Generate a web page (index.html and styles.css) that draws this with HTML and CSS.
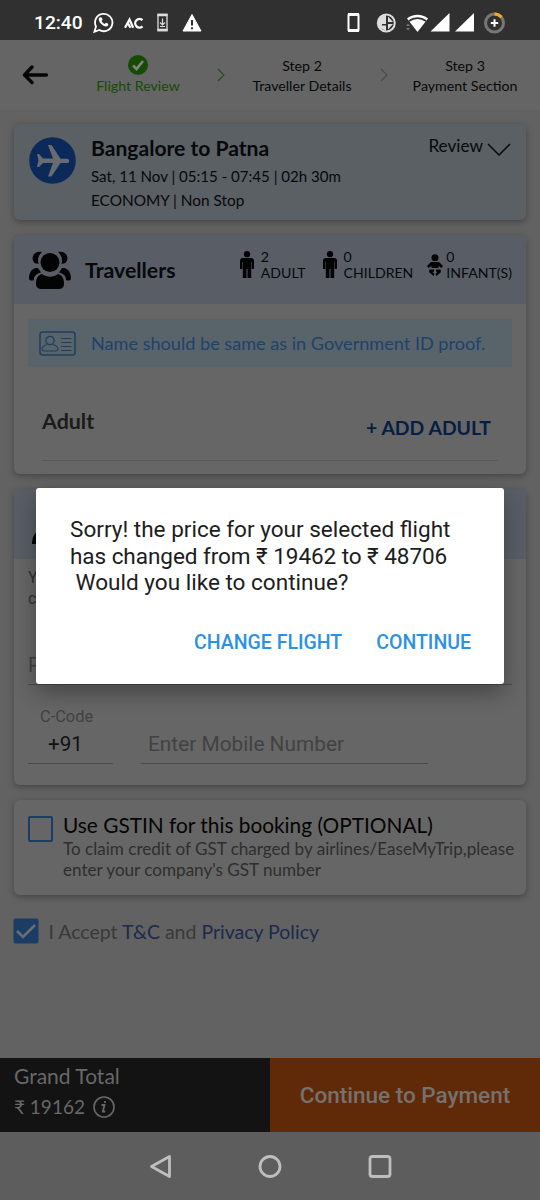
FILE: index.html
```html
<!DOCTYPE html>
<html lang="en">
<head>
<meta charset="utf-8">
<title>Traveller Details</title>
<link rel="stylesheet" href="styles.css">
</head>
<body>
<div class="screen">
  <div class="status">
    <span class="clock">12:40</span>
    <svg class="status-left" width="112" height="24" viewBox="0 0 112 24">
      <path d="M1.4 20.8 3 15.5A8.7 8.7 0 1 1 6.3 19z" fill="none" stroke="#fff" stroke-width="1.8"/>
      <path d="M7 6.3c-2 1-1.4 4 1 6.5s5.500 3.600 7 1.700c.5-.7.400-1.500-.3-1.900l-1.700-.8-1.300 1.200c-1.500-.6-2.500-1.600-3.100-3l1-1.200-.8-2c-.3-.6-1.100-.8-1.800-.5z" fill="#fff"/>
      <path d="M32 16.800 36.500 8.500 40.200 16.800M35 12.500l2.500 4.300" fill="none" stroke="#fff" stroke-width="2.200"/>
      <path d="M49.500 9.200A4.300 4.300 0 1 0 49.500 15.400" fill="none" stroke="#fff" stroke-width="2.300"/>
      <path d="M65 3.500h9v16h-9z" fill="none" stroke="#ddd" stroke-width="1.300"/><path d="M64.500 4h10M64.500 19h10" stroke="#ddd" stroke-width="2.500"/>
      <path d="M69.500 7.500v6M67 11.500l2.500 2.500 2.500-2.500M67 15.500h5" fill="none" stroke="#ddd" stroke-width="1.200"/>
      <path d="M99 3.500 108 20H90z" fill="#fff" stroke="#fff" stroke-linejoin="round"/><path d="M99 9v5.500M99 16.200v2" stroke="#303030" stroke-width="2"/>
    </svg>
    <svg class="status-right" width="162" height="24" viewBox="0 0 162 24">
      <rect x="2.500" y="3" width="10" height="17" rx="1" fill="none" stroke="#fff" stroke-width="2"/><path d="M2 3.500h11M2 19.500h11" stroke="#fff" stroke-width="3"/>
      <circle cx="40.300" cy="12" r="8.500" fill="none" stroke="#ddd" stroke-width="2"/><path d="M40 3.500A8.500 8.500 0 0 0 33 16.500L40 20v-5.500h-4V13h4zM42 5.500l5 5.500h-5zM42 13h5l-5 5.500z" fill="#ddd"/>
      <path d="M61 7.500a17 17 0 0 1 21 0L71.500 21z" fill="#fff"/><path d="M63 10a14 14 0 0 1 17 0" fill="none" stroke="#303030" stroke-width="1.700"/>
      <path d="m60 15 2-2.500 2 2.500zm0 2 2 2.500 2-2.500z" fill="#777"/>
      <path d="M103.500 2v18.500H84.500zM128 2v18.500h-19z" fill="#fff"/>
      <circle cx="148.500" cy="12" r="9" fill="none" stroke="#777" stroke-width="3"/><path d="M148.500 3a9 9 0 0 1 7 3.300" fill="none" stroke="#f3a91d" stroke-width="3"/><path d="M148.500 8.300v7.400M144.800 12h7.400" stroke="#fff" stroke-width="2"/>
    </svg>
  </div>

  <header class="steps">
    <svg class="back" width="27" height="20" viewBox="0 0 27 20"><path d="M10 2 2.500 10 10 17.500M3 10h21.500" fill="none" stroke="#050505" stroke-width="3.300" stroke-linecap="round" stroke-linejoin="round"/></svg>
    <div class="step step-done">
      <svg width="20" height="20" viewBox="0 0 20 20"><circle cx="10" cy="10" r="10" fill="#154b03"/><path d="m5 10.500 3.500 3.500 6.500-8" fill="none" stroke="#808080" stroke-width="2.700"/></svg>
      <span>Flight Review</span>
    </div>
    <svg class="sep" width="8" height="14" viewBox="0 0 8 14"><path d="m1 1 6 6-6 6" fill="none" stroke="#244d18" stroke-width="1.100"/></svg>
    <div class="step step-two"><span>Step 2</span><span>Traveller Details</span></div>
    <svg class="sep" width="8" height="14" viewBox="0 0 8 14"><path d="m1 1 6 6-6 6" fill="none" stroke="#4b4b4b" stroke-width="1.200"/></svg>
    <div class="step step-three"><span>Step 3</span><span>Payment Section</span></div>
  </header>

  <main class="content">
    <section class="card trip">
      <svg class="plane" width="47" height="47" viewBox="0 0 47 47"><circle cx="23.500" cy="23.500" r="23.300" fill="#0b2a5a"/><path d="M8 17h2l4 4.500h10L19 8h3.500l9 13.700H38a2.200 2.200 0 0 1 0 4.400h-6.500L22.500 39.500H19l5-13.400H14L10 30H8l1.500-6.500z" fill="#686b6f"/></svg>
      <div class="trip-text">
        <h1>Bangalore to Patna</h1>
        <p class="when">Sat, 11 Nov | 05:15 - 07:45 | 02h 30m</p>
        <p class="cabin">ECONOMY | Non Stop</p>
      </div>
      <div class="review"><span>Review</span><svg width="24" height="14" viewBox="0 0 24 14"><path d="m1 1 11 11L23 1" fill="none" stroke="#080a0c" stroke-width="1.500"/></svg></div>
    </section>

    <section class="card travellers">
      <div class="card-head">
        <svg class="group" width="42" height="38" viewBox="0 0 42 38" fill="#020304">
          <circle cx="21" cy="11.500" r="9.500"/>
          <path d="M13 1C5-1 1 7 5.500 12l4 1C8.500 8 9 5 13 1zM29 1c8-2 12 6 7.500 11l-4 1c1-5 .5-8-3.500-12zM9 17c-6-1-9 5-9 10 0 3 3 3 5 2 0-4 2-6 7-7.500zM33 17c6-1 9 5 9 10 0 3-3 3-5 2 0-4-2-6-7-7.500z"/>
          <path d="M13 23c5 3.500 11 3.500 16 0 4 1 6 4 6 10 0 4-3 5-6 5H13c-3 0-6-1-6-5 0-6 2-9 6-10z"/>
        </svg>
        <h2>Travellers</h2>
        <svg class="person person-a" width="14" height="28" viewBox="0 0 14 28"><use href="#person"/></svg>
        <div class="count count-a"><span>2</span><span>ADULT</span></div>
        <svg class="person" width="14" height="28" viewBox="0 0 14 28"><g id="person" fill="#020304"><circle cx="7" cy="3.200" r="3.100"/><path d="M3 7h8q3 0 3 3v8h-2.300v-7h-.5v16H7.500v-9h-1v9H2.800V11h-.5v7H0v-8q0-3 3-3z"/></g></svg>
        <div class="count count-c"><span>0</span><span>CHILDREN</span></div>
        <svg class="baby" width="16" height="23" viewBox="0 0 16 23" fill="#020304"><circle cx="8" cy="3.700" r="3.500"/><path d="M4 8h8l4 4-1.500 2-3-2v2h-7v-2l-3 2L0 12zM2.500 15.500l4.500 0 0 2-1.500.5 2 2-1 2-4.500-4zM13.500 15.500l-4.500 0 0 2 1.500.5-2 2 1 2 4.500-4z"/></svg>
        <div class="count"><span>0</span><span>INFANT(S)</span></div>
      </div>
      <div class="notice">
        <svg width="37" height="25" viewBox="0 0 37 25" fill="none" stroke="#1d3e60" stroke-width="1.200"><rect x="1" y="1" width="35" height="23" rx="2.500" stroke-width="1.500"/><circle cx="11" cy="9.500" r="4.200"/><path d="M8 13.500c-3 1-5 2-5 5 0 1 .5 1.500 2 1.500h12c1.500 0 2-.5 2-1.500 0-3-2-4-5-5M22 7.500h10.500M22 11.500h10.500M22 15.500h10.500M22 19.500h10.500"/></svg>
        <span>Name should be same as in Government ID proof.</span>
      </div>
      <div class="adult-row"><h3>Adult</h3><span class="add">+ ADD ADULT</span></div>
    </section>

    <section class="card contact">
      <div class="card-head contact-head"><svg width="34" height="34" viewBox="0 0 34 34" fill="#020304"><circle cx="17" cy="9" r="8"/><path d="M1 33c0-9 5-16 16-16s14 7 14 16z"/></svg></div>
      <p class="hint">Y<br>c</p>
      <div class="email">P</div>
      <div class="phone">
        <div class="code"><small>C-Code</small><span>+91</span></div>
        <div class="mobile">Enter Mobile Number</div>
      </div>
    </section>

    <section class="card gst">
      <span class="box"></span>
      <div><h4>Use GSTIN for this booking (OPTIONAL)</h4><p>To claim credit of GST charged by airlines/EaseMyTrip,please</p><p>enter your company's GST number</p></div>
    </section>

    <div class="accept">
      <svg width="26" height="26" viewBox="0 0 26 26"><rect x=".5" y=".5" width="25" height="25" rx="2" fill="#1b3c65"/><path d="m4 13 6 6L22 7" fill="none" stroke="#6b6d70" stroke-width="2.600"/></svg>
      <span>I Accept <a>T&amp;C</a> and <a>Privacy Policy</a></span>
    </div>
  </main>

  <footer class="pay">
    <div class="total">
      <span class="total-label">Grand Total</span>
      <span class="total-value">₹ 19162 <svg width="22" height="22" viewBox="0 0 22 22" fill="none" stroke="#686868"><circle cx="11" cy="11" r="10" stroke-width="1.600"/><path d="M8.500 9h3l-1.700 6.500h2.500M12 5v2" stroke-width="1.800"/></svg></span>
    </div>
    <div class="continue">Continue to Payment</div>
  </footer>

  <nav class="nav">
    <svg width="540" height="68" viewBox="0 0 540 68" fill="none" stroke="#bebebe" stroke-width="2.800" stroke-linejoin="round"><path d="M151.500 34.500 169.500 24.500v20z"/><circle cx="270" cy="34.500" r="10"/><rect x="370" y="24.500" width="20" height="20" rx="2.500"/></svg>
  </nav>

  <div class="dialog" role="dialog">
    <p>Sorry! the price for your selected flight<br><span class="amounts">has changed from ₹ 19462 to ₹ 48706</span><br>&nbsp;Would you like to continue?</p>
    <div class="actions"><span>CHANGE FLIGHT</span><span>CONTINUE</span></div>
  </div>
</div>
</body>
</html>
```
FILE: styles.css
```css
* { box-sizing: border-box; margin: 0; padding: 0; }
body { background: #626262; font-family: Lato, sans-serif; color: #07090b; }
svg { display: block; flex: none; }
.screen { position: relative; width: 540px; height: 1200px; display: flex; flex-direction: column; overflow: hidden; white-space: nowrap; }

.status { height: 40px; flex: none; background: #303030; display: flex; align-items: center; padding: 6px 24px 0 34px; }
.clock { font: 500 19.200px/24px Roboto, sans-serif; color: #fff; width: 59px; }
.status-right { margin-left: auto; margin-right: -22px; width: 192px; padding-right: 30px; }

.steps { height: 70px; flex: none; display: flex; background: #656565; font-size: 14.200px; line-height: 20px; padding-top: 16px; }
.back { margin: 9px 0 0 22px; }
.step { display: flex; flex-direction: column; align-items: center; }
.step-done { width: 100px; margin-left: 39px; color: #154b03; }
.step-done svg { margin-bottom: 1px; margin-top: -1px; }
.sep { margin: 12px 0 0 29px; }
.step-two { width: 110px; margin-left: 22px; }
.step-two + .sep { margin-left: 23px; }
.step-three { width: 120px; margin-left: 17px; }

.content { padding: 14px 14px 0; }
.card { background: #666; border-radius: 6px; box-shadow: 0 2px 6px #444; overflow: hidden; }
.trip { height: 96px; background: #5a6064; display: flex; padding: 13px 15px; margin-bottom: 15px; }
.trip-text { margin-left: 15px; margin-top: -1px; }
h1 { font-size: 21.100px; line-height: 24px; font-weight: 700; }
.when { font-size: 15.080px; line-height: 24px; margin-top: 4px; }
.cabin { font-size: 15.350px; line-height: 25px; }
.review { margin-left: auto; display: flex; font-size: 17.200px; line-height: 20px; gap: 4px; margin-top: -1px; }
.review svg { margin-top: 7px; }

.travellers { height: 239px; margin-bottom: 15px; }
.card-head { height: 69px; background: #595e66; display: flex; padding: 15px 14px; }
.group { margin: 1px 0 0 1px; }
h2 { font-size: 21.300px; line-height: 40px; margin-left: 14px; width: 91px; }
.person { margin: 1px 0 0 0; }
.person.person-a { margin-left: 64px; }
.baby { margin-top: 4px; }
.count { display: flex; flex-direction: column; font-size: 14.100px; line-height: 16px; margin: -1px 0 0 6px; }
.count-a { width: 62px; margin-left: 7px; }
.count-c { width: 84px; margin-left: 7px; }
.card-head .count:last-child { margin-left: 3px; }
.notice { height: 48px; margin: 15px 14px 0; background: #59646a; color: #20426a; display: flex; align-items: center; font-size: 18.130px; padding-left: 11px; gap: 15px; }
.adult-row { margin: 25px 28px 0; height: 69px; display: flex; justify-content: space-between; border-bottom: 1px solid #595959; padding-right: 7px; }
h3 { color: #1b1b1b; font-size: 21.400px; line-height: 58px; }
.add { color: #051e43; font-size: 19.400px; font-weight: 700; line-height: 71px; }

.contact { height: 296px; margin-bottom: 15px; }
.contact-head { height: 70px; padding-top: 22px; padding-left: 17px; }
.hint { width: 22px; color: #303030; font: 16px/21px Roboto, sans-serif; padding: 8px 0 1px 14px; }
.email { font: 20px/36px Roboto, sans-serif; color: #424242; margin: 37px 14px 0; height: 38px; border-bottom: 1px solid #4a4a4a; }
.phone { display: flex; padding: 20px 14px 0; font-family: Roboto, sans-serif; }
.code { width: 85px; height: 59px; border-bottom: 1px solid #4b4b4b; color: #111; display: flex; flex-direction: column; padding-left: 12px; }
.code small { font-size: 16.400px; line-height: 23px; color: #424242; }
.code span { font-size: 20.500px; line-height: 33px; padding-left: 8px; }
.mobile { margin-left: 28px; width: 287px; height: 59px; border-bottom: 1px solid #4b4b4b; font-size: 20.850px; line-height: 24px; padding: 27px 0 0 7px; color: #424242; }

.gst { height: 95px; display: flex; padding: 12px 14px; margin-bottom: 23px; }
.box { width: 25px; height: 26px; border: 2px solid #1b3c65; border-radius: 2px; margin: 4px 10px 0 0; flex: none; }
h4 { font-weight: 400; font-size: 20.830px; line-height: 25px; color: #040404; margin-bottom: 1px; }
.gst p { font-size: 17.080px; line-height: 21px; color: #2e2e2e; }
.accept { display: flex; gap: 10px; margin-left: -1.500px; font-size: 19.500px; line-height: 27px; color: #393939; }
.accept a { color: #1c2a4c; }

.pay { height: 74px; margin-top: auto; flex: none; display: flex; }
.total { width: 270px; background: #131313; color: #686868; padding: 3px 14px; display: flex; flex-direction: column; }
.total-label { font-size: 21px; line-height: 30px; }
.total-value { line-height: 31px; display: flex; align-items: center; gap: 8px; font-size: 19px; }
.continue { width: 270px; background: #602a08; color: #77716d; font: 500 22.500px/75px Roboto, sans-serif; text-align: center; }
.nav { height: 68px; flex: none; background: #5d5d5d; }

.dialog { position: absolute; left: 36px; top: 488px; width: 468px; height: 196px; border-radius: 3px; background: #fff; padding: 29px 33px 0 34px; font-family: Roboto, sans-serif; box-shadow: 0 9px 22px rgba(0,0,0,.32); color: #1d1d1d; }
.dialog p { font-size: 22.550px; line-height: 26.500px; }
.amounts { letter-spacing: -.07px; }
.actions { display: flex; justify-content: flex-end; gap: 34px; margin-top: 34px; font-size: 19.500px; line-height: 24px; font-weight: 500; color: #2a91e5; }
```
